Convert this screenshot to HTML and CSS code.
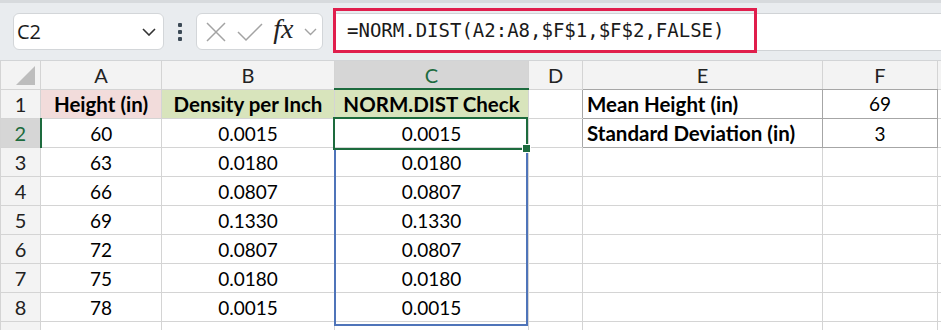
FILE: index.html
```html
<!DOCTYPE html>
<html lang="en">
<head>
    <meta charset="UTF-8">
    <meta name="viewport" content="width=device-width, initial-scale=1.0">
    <title>NORM.DIST Check</title>
    <link rel="stylesheet" href="styles.css">
</head>
<body>
    <div class="toolbar">
        <div class="namebox">
            <span>C2</span>
            <svg class="chev" width="14" height="8" viewBox="0 0 14 8"><path d="M1 1 L7 7 L13 1" fill="none" stroke="#333" stroke-width="1.6"/></svg>
        </div>
        <div class="dots"><i></i><i></i><i></i></div>
        <div class="fxbox">
            <svg width="20" height="20" viewBox="0 0 20 20"><path d="M1 1 L19 19 M19 1 L1 19" stroke="#a3a3a3" stroke-width="1.5"/></svg>
            <svg width="26" height="20" viewBox="0 0 26 20"><path d="M1 10 L9 18 L25 2" fill="none" stroke="#a3a3a3" stroke-width="1.5"/></svg>
            <span class="fx">fx</span>
            <svg width="13" height="8" viewBox="0 0 13 8"><path d="M1 1 L6.5 6.5 L12 1" fill="none" stroke="#a3a3a3" stroke-width="1.4"/></svg>
        </div>
        <div class="formula">
            <div class="formula-mark">=NORM.DIST(A2:A8,$F$1,$F$2,FALSE)</div>
        </div>
    </div>

    <div class="sheet">
        <table class="grid">
            <colgroup>
                <col style="width:40px">
                <col style="width:121px">
                <col style="width:173px">
                <col style="width:194px">
                <col style="width:54px">
                <col style="width:240px">
                <col style="width:115px">
                <col style="width:4px">
            </colgroup>
            <tr class="colhead">
                <th class="corner"><span class="tri"></span></th>
                <th>A</th><th>B</th><th class="active">C</th><th>D</th><th class="edge-b">E</th><th class="edge-b">F</th><th></th>
            </tr>
            <tr>
                <th class="rowhead">1</th>
                <td class="pink b">Height (in)</td>
                <td class="green b">Density per Inch</td>
                <td class="green b">NORM.DIST Check</td>
                <td class="edge-r"></td>
                <td class="box left b">Mean Height (in)</td>
                <td class="box">69</td>
                <td></td>
            </tr>
            <tr>
                <th class="rowhead active">2</th>
                <td>60</td><td>0.0015</td><td>0.0015</td><td class="edge-r"></td>
                <td class="box left b">Standard Deviation (in)</td>
                <td class="box">3</td>
                <td></td>
            </tr>
            <tr><th class="rowhead">3</th><td>63</td><td>0.0180</td><td>0.0180</td><td></td><td></td><td></td><td></td></tr>
            <tr><th class="rowhead">4</th><td>66</td><td>0.0807</td><td>0.0807</td><td></td><td></td><td></td><td></td></tr>
            <tr><th class="rowhead">5</th><td>69</td><td>0.1330</td><td>0.1330</td><td></td><td></td><td></td><td></td></tr>
            <tr><th class="rowhead">6</th><td>72</td><td>0.0807</td><td>0.0807</td><td></td><td></td><td></td><td></td></tr>
            <tr><th class="rowhead">7</th><td>75</td><td>0.0180</td><td>0.0180</td><td></td><td></td><td></td><td></td></tr>
            <tr><th class="rowhead">8</th><td>78</td><td>0.0015</td><td>0.0015</td><td></td><td></td><td></td><td></td></tr>
            <tr><th class="rowhead"></th><td></td><td></td><td></td><td></td><td></td><td></td><td></td></tr>
        </table>

        <!-- range and active cell drawn over the grid -->
        <div class="range"></div>
        <div class="selection"></div>
        <div class="handle"></div>
    </div>
</body>
</html>
```

FILE: styles.css
```css
body {
    margin: 0;
    width: 941px;
    height: 330px;
    overflow: hidden;
    background: #fff;
    font-family: Lato, "Liberation Sans", sans-serif;
}
.toolbar {
    box-sizing: border-box;
    height: 61px;
    padding-left: 13px;
    display: flex;
    align-items: center;
    background: #e9ecef;
    border-top: 3px solid #d7dadd;
    border-bottom: 1px solid #d2d4d6;
}
.namebox {
    box-sizing: border-box;
    width: 151px;
    height: 37px;
    padding: 0 7px 0 3px;
    display: flex;
    align-items: center;
    justify-content: space-between;
    background: #fff;
    border: 1px solid #d3d6d9;
    border-radius: 6px;
    font-family: "Open Sans", "Noto Sans", sans-serif;
    font-size: 20px;
    color: #1a1a1a;
}
.dots {
    width: 4px;
    margin: 0 14px 0 14px;
    display: flex;
    flex-direction: column;
    gap: 3px;
}
.dots i {
    width: 4px;
    height: 4px;
    background: #3c4a56;
    border-radius: 1px;
}
.fxbox {
    box-sizing: border-box;
    width: 127px;
    height: 37px;
    padding: 0 5px 0 9px;
    display: flex;
    align-items: center;
    justify-content: space-between;
    background: #fff;
    border: 1px solid #d3d6d9;
    border-radius: 6px;
}
.fx {
    font-family: "Liberation Serif", serif;
    font-style: italic;
    font-size: 28px;
    color: #222;
    margin-top: -5px;
}
.formula {
    flex: 1;
    height: 36px;
    margin-left: 10px;
    display: flex;
    align-items: center;
    background: #fff;
    border-top: 1px solid #d0d3d6;
    border-bottom: 1px solid #d0d3d6;
}
.formula-mark {
    box-sizing: border-box;
    width: 424px;
    height: 45px;
    margin-top: -3px;
    padding-left: 11px;
    display: flex;
    align-items: center;
    border: 3px solid #e01e4c;
    font-family: "DejaVu Sans Mono", monospace;
    font-size: 19px;
    color: #1a1a1a;
}
.sheet {
    position: relative;
}
.grid {
    border-collapse: collapse;
    table-layout: fixed;
    width: 941px;
}
.grid th,
.grid td {
    padding: 0;
    border: 1px solid #d4d4d4;
    height: 28px;
    text-align: center;
    font-size: 19px;
    color: #000;
    white-space: nowrap;
    overflow: hidden;
}
.grid th {
    font-weight: normal;
    background: #f3f3f3;
    color: #222;
    font-size: 20px;
}
.colhead th {
    height: 27px;
    border-top: none;
}
.corner {
    position: relative;
}
.tri {
    position: absolute;
    right: 5px;
    bottom: 4px;
    width: 0;
    height: 0;
    border-left: 19px solid transparent;
    border-bottom: 19px solid #bdbdbd;
}
.grid th.active {
    background: #d6d6d6;
    color: #1d6b3e;
}
.colhead th.active {
    border-bottom: 2px solid #1d6b3e;
}
.rowhead.active {
    border-right: 2px solid #1d6b3e;
}
.grid td.b {
    font-weight: bold;
    font-size: 20.5px;
}
.pink {
    background: #f2dcdb;
}
.green {
    background: #d8e4bc;
}
.grid td.box {
    border-color: #a6a6a6;
}
.grid th.edge-b {
    border-bottom-color: #a6a6a6;
}
.grid td.edge-r {
    border-right-color: #a6a6a6;
}
.grid td.left {
    text-align: left;
    padding-left: 4px;
}
.range {
    position: absolute;
    left: 334px;
    top: 87px;
    width: 190px;
    height: 174px;
    border: 2px solid #4f74b9;
}
.selection {
    position: absolute;
    left: 333px;
    top: 56px;
    width: 191px;
    height: 29px;
    border: 2px solid #1d6b3e;
}
.handle {
    position: absolute;
    left: 523px;
    top: 84px;
    width: 7px;
    height: 7px;
    background: #1d6b3e;
    outline: 1px solid #fff;
}
```
